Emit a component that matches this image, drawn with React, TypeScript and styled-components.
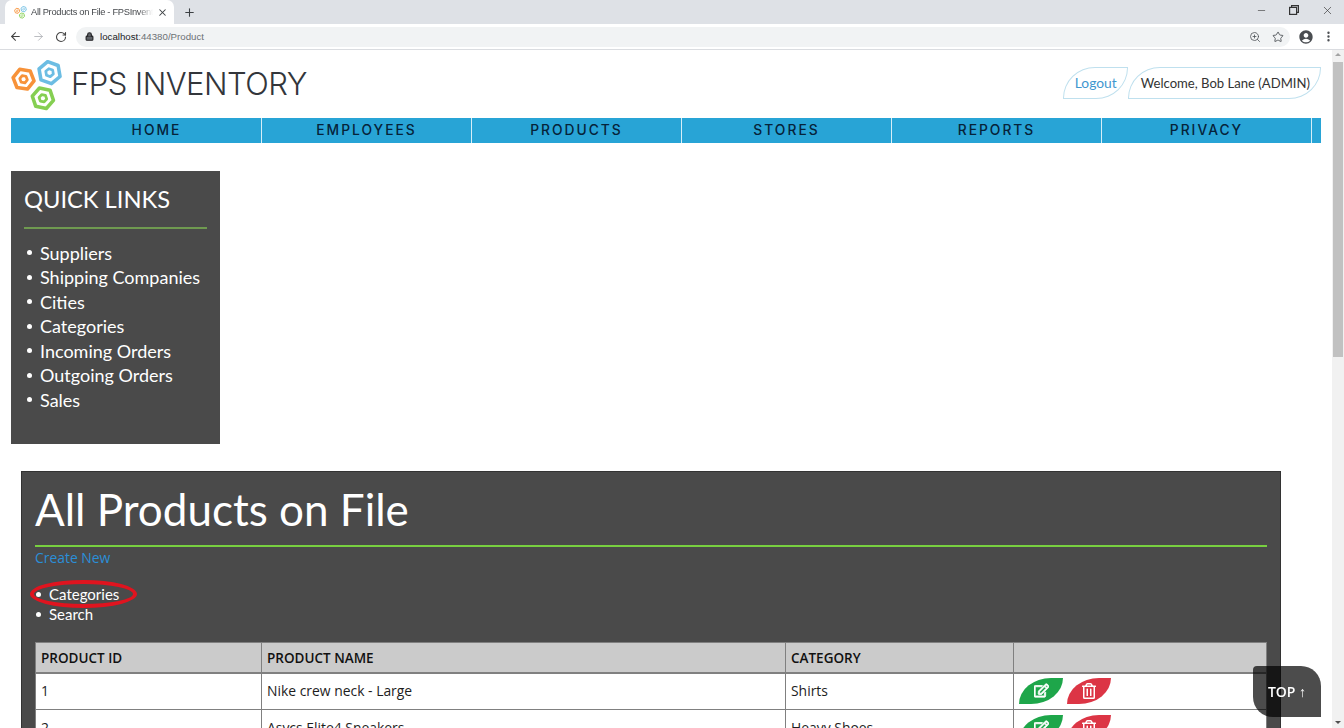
import styled, { createGlobalStyle } from "styled-components";
import { ArrowLeft, ArrowRight, Lock, Minus, MoreVertical, Plus, RotateCw, Star, X, ZoomIn } from "lucide-react";
import { MdAccountCircle } from "react-icons/md";
import { FaRegEdit, FaRegTrashAlt } from "react-icons/fa";

const GlobalStyle = createGlobalStyle`
  html, body {
    margin: 0;
    height: 728px;
    overflow: hidden;
    background: #fff;
  }
  * {
    box-sizing: border-box;
  }
`;

const Window = styled.div`
  height: 728px;
  display: flex;
  flex-direction: column;
  overflow: hidden;
  font-family: "Open Sans", sans-serif;
`;

const TabStrip = styled.div`
  height: 24px;
  flex: none;
  background: #dee1e6;
  display: flex;
  align-items: flex-end;
  padding-left: 5px;
  color: #3c4043;
`;

const Tab = styled.div`
  width: 169px;
  height: 24px;
  background: #fff;
  border-radius: 7px 7px 0 0;
  display: flex;
  align-items: center;
  padding: 0 6px 0 9px;
  gap: 4px;
`;

const TabTitle = styled.span`
  flex: 1;
  padding-bottom: 1px;
  font: 9.3px "Liberation Sans", sans-serif;
  letter-spacing: -0.3px;
  white-space: nowrap;
  overflow: hidden;
  color: #45484c;
  mask-image: linear-gradient(90deg, #000 88%, transparent);
`;

const NewTab = styled.div`
  margin: 0 0 0 9px;
  height: 24px;
  display: flex;
  align-items: center;
`;

const WindowButtons = styled.div`
  margin-left: auto;
  height: 24px;
  display: flex;
  align-items: center;
  gap: 22px;
  padding: 0 10px 4px 0;
  color: #333;
`;

const RestoreIcon = styled.svg`
  width: 10px;
  height: 10px;
  fill: none;
  stroke: #333;
  stroke-width: 1.2;
`;

const Toolbar = styled.div`
  height: 26px;
  flex: none;
  background: #fff;
  border-bottom: 1px solid #dadce0;
  display: flex;
  align-items: center;
  padding: 0 8px 0 9px;
  color: #5f6368;
`;

const NavIcons = styled.div`
  display: flex;
  align-items: center;
  gap: 10px;
  width: 67px;
  flex: none;
`;

const UrlPill = styled.div`
  width: 1214px;
  height: 20px;
  flex: none;
  background: #f1f3f4;
  border-radius: 10px;
  display: flex;
  align-items: center;
  padding: 0 6px 0 9px;
  font: 9.5px "Liberation Sans", sans-serif;
  color: #202124;
`;

const UrlText = styled.span`
  margin-left: 6px;
  flex: 1;
  font-size: 9.7px;
`;

const UrlPath = styled.span`
  color: #6d7175;
`;

const PillIcons = styled.div`
  display: flex;
  align-items: center;
  gap: 11px;
  color: #4d5156;
`;

const ProfileIcons = styled.div`
  display: flex;
  align-items: center;
  gap: 8px;
  margin-left: 8px;
  color: #4a4d51;
`;

const Viewport = styled.div`
  flex: 1;
  min-height: 0;
  display: flex;
`;

const Page = styled.main`
  flex: 1;
  min-width: 0;
  overflow: hidden;
  padding: 0 11px 0 11px;
`;

const Scrollbar = styled.div`
  width: 12px;
  flex: none;
  background: #f1f1f1;
  display: flex;
  flex-direction: column;
  align-items: center;
  padding: 3px 0 4px;
`;

const ScrollArrow = styled.span<{ $down?: boolean }>`
  width: 0;
  height: 0;
  flex: none;
  border-left: 3px solid transparent;
  border-right: 3px solid transparent;
  border-top: ${({ $down }) => ($down ? "3px solid #505050" : "0")};
  border-bottom: ${({ $down }) => ($down ? "0" : "3px solid #a3a3a3")};
  margin-top: ${({ $down }) => ($down ? "auto" : "0")};
`;

const ScrollThumb = styled.div`
  width: 10px;
  height: 295px;
  margin-top: 6px;
  background: #c1c1c1;
`;

const Masthead = styled.header`
  height: 68px;
  display: flex;
  align-items: flex-start;
  justify-content: space-between;
`;

const Brand = styled.div`
  display: flex;
  align-items: flex-start;
  padding-top: 10px;
  gap: 9px;
`;

const BrandName = styled.h1`
  margin: 5px 0 0 -1px;
  font: 300 31px/38px Inter, sans-serif;
  letter-spacing: -0.5px;
  color: #33363b;
`;

const UserLinks = styled.div`
  display: flex;
  margin-top: 17px;
`;

const UserLeaf = styled.a<{ $link?: boolean }>`
  height: 32px;
  display: flex;
  align-items: center;
  padding: 0 ${({ $link }) => ($link ? "10px 1px 11px" : "10px 1px 12px")};
  border: 1px solid #bfe0ee;
  border-radius: 32px 0 32px 0 / 31px 0 31px 0;
  font: ${({ $link }) => ($link ? "13.8px" : "13.1px")} Lato, sans-serif;
  color: ${({ $link }) => ($link ? "#3f97cf" : "#333")};
`;

const NavBar = styled.ul`
  margin: 0;
  height: 25px;
  list-style: none;
  padding: 0 0 0 41px;
  background: #28a4d6;
  display: flex;
`;

const NavItem = styled.li`
  width: 210px;
  height: 25px;
  padding-bottom: 1px;
  border-right: 1px solid #d7eef7;
  display: flex;
  align-items: center;
  justify-content: center;
  font: 500 13.8px Inter, sans-serif;
  letter-spacing: 2px;
  color: #06233a;
`;

const QuickLinks = styled.aside`
  margin-top: 28px;
  width: 209px;
  height: 273px;
  background: #4a4a4a;
  padding: 14px 13px;
  color: #fff;
`;

const QuickTitle = styled.h2`
  margin: 0;
  font: 400 23.7px/28px Lato, sans-serif;
`;

const GreenRule = styled.div<{ $bright?: boolean }>`
  margin: ${({ $bright }) => ($bright ? "0" : "14px 0 11.6px")};
  height: 2px;
  background: ${({ $bright }) => ($bright ? "#78d040" : "#6f9a50")};
`;

const LinkList = styled.ul`
  margin: 0;
  padding: 0;
  list-style: none;
`;

const LinkItem = styled.li`
  display: flex;
  align-items: center;
  gap: 8px;
  font: 18px/24.5px Lato, sans-serif;

  &::before {
    content: "";
    width: 5px;
    height: 5px;
    margin-left: 3px;
    border-radius: 50%;
    background: #fff;
  }
`;

const ProductsPanel = styled.section`
  margin: 27px 0 0 10px;
  width: 1260px;
  background: #4a4a4a;
  border: 1px solid #333;
  padding: 11px 13px 0;
  color: #fff;
`;

const PanelTitle = styled.h1`
  margin: 0;
  font: 400 44px/53px Lato, sans-serif;
  height: 62px;
`;

const CreateLink = styled.a`
  display: block;
  margin-top: 1px;
  font: 13.9px/19px "Open Sans", sans-serif;
  color: #2a8fd8;
`;

const FilterList = styled.ul`
  margin: 17px 0 18px;
  padding: 0;
  list-style: none;
`;

const FilterItem = styled.li`
  position: relative;
  display: flex;
  align-items: center;
  gap: 8px;
  font: 15px/20px Lato, sans-serif;

  &::before {
    content: "";
    width: 5px;
    height: 5px;
    margin-left: 1px;
    border-radius: 50%;
    background: #fff;
  }
`;

const Highlight = styled.span`
  position: absolute;
  left: -5px;
  top: -4px;
  width: 107px;
  height: 28px;
  border: 4px solid #e0141f;
  border-radius: 50%;
`;

const ProductTable = styled.table`
  width: 100%;
  border-collapse: collapse;
  table-layout: fixed;
  background: #fff;
  color: #1d1d1d;
  font-size: 13.9px;
`;

const HeadCell = styled.th`
  height: 30px;
  padding: 1px 5px 0;
  background: #cbcbcb;
  border: 1px solid #808080;
  border-bottom-width: 2px;
  text-align: left;
  font-size: 13.5px;
  font-weight: 600;
  color: #111;
`;

const BodyCell = styled.td`
  height: 37px;
  padding: 0 5px 1px;
  border: 1px solid #808080;
`;

const Actions = styled.div`
  display: flex;
  gap: 4px;
`;

const LeafButton = styled.button<{ $danger?: boolean }>`
  width: 44px;
  height: 26px;
  padding: 0;
  border: 0;
  border-radius: 32px 0 32px 0 / 26px 0 26px 0;
  display: flex;
  align-items: center;
  justify-content: center;
  color: #fff;
  background: ${({ $danger }) => ($danger ? "#dc3545" : "#1ea64a")};
`;

const TopButton = styled.a`
  position: fixed;
  left: 1253px;
  top: 666px;
  width: 68px;
  height: 51px;
  display: flex;
  align-items: center;
  justify-content: center;
  border-radius: 4px 20px 0 20px;
  background: rgba(0, 0, 0, 0.7);
  color: #fff;
  font: 600 14px "Open Sans", sans-serif;
`;

const products = [
  { id: 1, name: "Nike crew neck - Large", category: "Shirts" },
  { id: 2, name: "Asycs Elite4 Sneakers", category: "Heavy Shoes" },
];

const navLinks = ["HOME", "EMPLOYEES", "PRODUCTS", "STORES", "REPORTS", "PRIVACY"];
const quickLinks = ["Suppliers", "Shipping Companies", "Cities", "Categories", "Incoming Orders", "Outgoing Orders", "Sales"];

function hexPoints(cx: number, cy: number, r: number, turn: number) {
  return [0, 1, 2, 3, 4, 5]
    .map((i) => {
      const a = (Math.PI / 3) * i + turn;
      return `${cx + r * Math.cos(a)},${cy + r * Math.sin(a)}`;
    })
    .join(" ");
}

function Hexagon({ cx, cy, r, color, turn }: { cx: number; cy: number; r: number; color: string; turn: number }) {
  return (
    <g fill="none" stroke={color} strokeLinejoin="round">
      <polygon points={hexPoints(cx, cy, r, turn)} strokeWidth={3.6} />
      <polygon points={hexPoints(cx, cy, r * 0.36, turn)} strokeWidth={2.8} />
    </g>
  );
}

function Logo({ size }: { size: number }) {
  return (
    <svg width={size} height={size} viewBox="0 0 52 53">
      <Hexagon cx={12.3} cy={19.6} r={10.8} color="#f79239" turn={0.15} />
      <Hexagon cx={38.8} cy={12.9} r={11.4} color="#6cbde3" turn={0.35} />
      <Hexagon cx={32} cy={39} r={11} color="#85cf52" turn={0.2} />
    </svg>
  );
}

export default function App() {
  return (
    <Window>
      <GlobalStyle />
      <TabStrip>
        <Tab>
          <Logo size={13} />
          <TabTitle>All Products on File - FPSInventory</TabTitle>
          <X size={11} strokeWidth={2.2} />
        </Tab>
        <NewTab>
          <Plus size={13} strokeWidth={2} />
        </NewTab>
        <WindowButtons>
          <Minus size={11} strokeWidth={1.3} />
          <RestoreIcon viewBox="0 0 10 10">
            <rect x="0.6" y="2.4" width="7" height="7" />
            <path d="M2.6 2.4V.6h6.8v6.8H7.6" />
          </RestoreIcon>
          <X size={13} strokeWidth={1.2} />
        </WindowButtons>
      </TabStrip>
      <Toolbar>
        <NavIcons>
          <ArrowLeft size={13} strokeWidth={2} color="#444" />
          <ArrowRight size={13} strokeWidth={1.6} color="#b0b3b7" />
          <RotateCw size={12} strokeWidth={2.2} color="#444" />
        </NavIcons>
        <UrlPill>
          <Lock size={9} strokeWidth={3} fill="#5f6368" />
          <UrlText>
            localhost<UrlPath>:44380/Product</UrlPath>
          </UrlText>
          <PillIcons>
            <ZoomIn size={12} strokeWidth={1.6} />
            <Star size={12} strokeWidth={1.8} />
          </PillIcons>
        </UrlPill>
        <ProfileIcons>
          <MdAccountCircle size={16} />
          <MoreVertical size={13} strokeWidth={2.4} />
        </ProfileIcons>
      </Toolbar>
      <Viewport>
        <Page>
          <Masthead>
            <Brand>
              <Logo size={52} />
              <BrandName>FPS INVENTORY</BrandName>
            </Brand>
            <UserLinks>
              <UserLeaf $link>Logout</UserLeaf>
              <UserLeaf>Welcome, Bob Lane (ADMIN)</UserLeaf>
            </UserLinks>
          </Masthead>
          <NavBar>
            {navLinks.map((link) => (
              <NavItem key={link}>{link}</NavItem>
            ))}
          </NavBar>
          <QuickLinks>
            <QuickTitle>QUICK LINKS</QuickTitle>
            <GreenRule />
            <LinkList>
              {quickLinks.map((link) => (
                <LinkItem key={link}>{link}</LinkItem>
              ))}
            </LinkList>
          </QuickLinks>
          <ProductsPanel>
            <PanelTitle>All Products on File</PanelTitle>
            <GreenRule $bright />
            <CreateLink>Create New</CreateLink>
            <FilterList>
              <FilterItem>
                Categories
                <Highlight />
              </FilterItem>
              <FilterItem>Search</FilterItem>
            </FilterList>
            <ProductTable>
              <colgroup>
                <col width="226" />
                <col width="524" />
                <col width="228" />
                <col />
              </colgroup>
              <thead>
                <tr>
                  <HeadCell>PRODUCT ID</HeadCell>
                  <HeadCell>PRODUCT NAME</HeadCell>
                  <HeadCell>CATEGORY</HeadCell>
                  <HeadCell />
                </tr>
              </thead>
              <tbody>
                {products.map((product) => (
                  <tr key={product.id}>
                    <BodyCell>{product.id}</BodyCell>
                    <BodyCell>{product.name}</BodyCell>
                    <BodyCell>{product.category}</BodyCell>
                    <BodyCell>
                      <Actions>
                        <LeafButton>
                          <FaRegEdit size={15} stroke="currentColor" strokeWidth={30} />
                        </LeafButton>
                        <LeafButton $danger>
                          <FaRegTrashAlt size={16} />
                        </LeafButton>
                      </Actions>
                    </BodyCell>
                  </tr>
                ))}
              </tbody>
            </ProductTable>
          </ProductsPanel>
        </Page>
        <Scrollbar>
          <ScrollArrow />
          <ScrollThumb />
          <ScrollArrow $down />
        </Scrollbar>
      </Viewport>
      <TopButton>TOP ↑</TopButton>
    </Window>
  );
}
